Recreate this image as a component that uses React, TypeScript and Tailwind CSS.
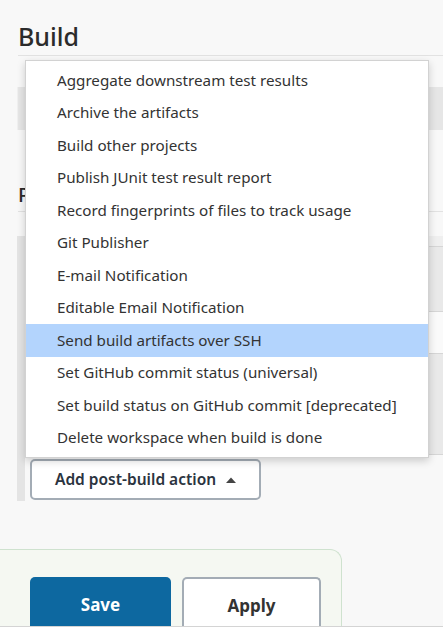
import React from "react";

const items = [
  "Aggregate downstream test results",
  "Archive the artifacts",
  "Build other projects",
  "Publish JUnit test result report",
  "Record fingerprints of files to track usage",
  "Git Publisher",
  "E-mail Notification",
  "Editable Email Notification",
  "Send build artifacts over SSH",
  "Set GitHub commit status (universal)",
  "Set build status on GitHub commit [deprecated]",
  "Delete workspace when build is done",
];

export default function App() {
  return (
    <div
      className="relative w-[443px] h-[633px] overflow-hidden bg-[#f8f8f8] text-[#333]"
      style={{ fontFamily: '"Noto Sans", "Open Sans", sans-serif' }}
    >
      <div className="flex flex-col pl-[18px]">
        <h2 className="pt-[19px] h-[56px] text-[25px] leading-[34px] font-medium text-[#2b2b2b] border-b border-[#e2e2e2]">
          Build
        </h2>
        <div className="mt-[31px] h-[43px] -ml-px bg-[#e6e6e6] border-l border-[#f0f0f0]" />
        <div className="mt-[52px] h-[30px] text-[20px] leading-[26px] font-medium text-[#2b2b2b] border-b border-[#e2e2e2]">
          Post-build Actions
        </div>
        <div className="mt-[24px] flex -ml-px">
          <div className="w-[8px] h-[265px] bg-[#e4e4e4]" />
          <div className="flex-1 flex flex-col">
            <div className="h-[10px] bg-[#efefef]" />
            <div className="h-[65px] bg-[#e9e9e9] border-t border-[#d6d6d6]" />
            <div className="h-[42px] bg-[#fafafa] border-t border-[#d6d6d6]" />
            <div className="h-[102px] bg-[#e9e9e9] border-t border-[#d6d6d6] border-b" />
            <div className="pt-[4px] pl-[5px]">
              <button className="flex items-center w-[231px] h-[41px] rounded-[5px] border-2 border-[#a3acb5] bg-white pl-[23px] text-[15.5px] font-semibold text-[#2b3440] whitespace-nowrap">
                Add post-build action
                <svg width="10" height="6" viewBox="0 0 10 6" className="ml-[10px]">
                  <path d="M0 6 L5 0.5 L10 6 Z" fill="#444" />
                </svg>
              </button>
            </div>
          </div>
        </div>
      </div>

      <div className="absolute left-0 top-[549px] w-[342px] h-[77px] bg-[#f5f8f2] border-t border-r border-[#cfe2cf] rounded-tr-[12px]" />
      <div className="absolute left-[30px] top-[577px] flex gap-[11px]">
        <button className="w-[141px] h-[56px] rounded-t-[5px] bg-[#0d68a0] text-white text-[17px] font-bold">
          Save
        </button>
        <button className="w-[139px] h-[56px] rounded-t-[5px] border-2 border-b-0 border-[#a3acb5] bg-white text-[#333] text-[17px] font-bold">
          Apply
        </button>
      </div>
      <div className="absolute z-10 left-0 top-[626px] w-full h-[7px] bg-white border-t border-[#d4d4d4]" />

      <div className="absolute z-20 left-[25px] top-[60px] w-[404px] h-[398px] bg-white border border-[#d2d2d2] shadow-[0_3px_8px_rgba(0,0,0,0.18)] pt-[3px]">
        {items.map((t, i) => (
          <div
            key={t}
            className={`h-[32.5px] flex items-center pl-[31px] text-[15.2px] text-[#333] whitespace-nowrap ${
              i === 8 ? "bg-[#b3d4fd]" : ""
            }`}
          >
            {t}
          </div>
        ))}
      </div>
    </div>
  );
}
